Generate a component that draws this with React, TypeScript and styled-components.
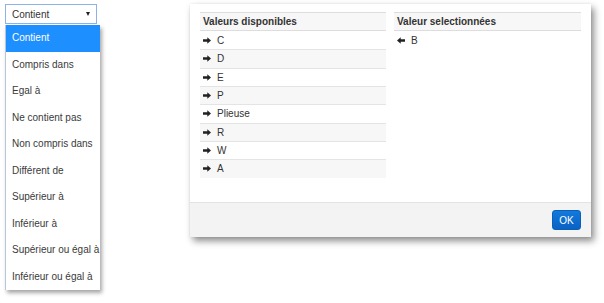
import React from "react";
import styled, { createGlobalStyle } from "styled-components";

const GlobalStyle = createGlobalStyle`
  html, body {
    margin: 0;
    padding: 0;
    background: #ffffff;
    font-family: "Liberation Sans", Arial, sans-serif;
  }
`;

const operators = [
  "Contient",
  "Compris dans",
  "Egal à",
  "Ne contient pas",
  "Non compris dans",
  "Différent de",
  "Supérieur à",
  "Inférieur à",
  "Supérieur ou égal à",
  "Inférieur ou égal à",
];

const available = ["C", "D", "E", "P", "Plieuse", "R", "W", "A"];
const selected = ["B"];

const Page = styled.div`
  display: flex;
  align-items: flex-start;
  padding: 4px 0 0 5px;
  width: 604px;
  height: 303px;
  box-sizing: border-box;
`;

const Dropdown = styled.div`
  display: flex;
  flex-direction: column;
  width: 95px;
`;

const Select = styled.div`
  display: flex;
  align-items: center;
  justify-content: space-between;
  width: 92px;
  height: 20px;
  box-sizing: border-box;
  padding: 0 6px 0 6px;
  border: 1px solid #8eb1e6;
  font-size: 10px;
  color: #333;
`;

const Caret = styled.span`
  width: 0;
  height: 0;
  border-left: 2.5px solid transparent;
  border-right: 2.5px solid transparent;
  border-top: 4px solid #222;
`;

const List = styled.ul`
  list-style: none;
  margin: 1px 0 0;
  padding: 0;
  background: #fff;
  border-left: 1px solid #b8c6dc;
  box-shadow: 2px 3px 4px rgba(0, 0, 0, 0.35);
  overflow: hidden;
`;

const Option = styled.li<{ $active?: boolean }>`
  height: 26.5px;
  line-height: 26.5px;
  padding-left: 6px;
  font-size: 10px;
  white-space: nowrap;
  color: ${(p) => (p.$active ? "#fff" : "#3a3a3a")};
  background: ${(p) => (p.$active ? "#1e8fff" : "#fff")};
`;

const Dialog = styled.div`
  margin-left: 90px;
  width: 401px;
  display: flex;
  flex-direction: column;
  background: #fff;
  box-shadow: 3px 4px 7px rgba(0, 0, 0, 0.45), 0 0 2px rgba(0, 0, 0, 0.08);
`;

const Body = styled.div`
  display: grid;
  grid-template-columns: 186px 187px;
  column-gap: 8px;
  padding: 8px 10px 0 10px;
  height: 198px;
  box-sizing: border-box;
`;

const Table = styled.div`
  display: flex;
  flex-direction: column;
  font-size: 10px;
  color: #333;
`;

const Header = styled.div`
  height: 19px;
  box-sizing: border-box;
  line-height: 17px;
  padding: 0 3px;
  font-weight: bold;
  background: #f7f7f7;
  border-top: 1px solid #dddddd;
  border-bottom: 1px solid #dddddd;
`;

const Row = styled.div<{ $striped?: boolean }>`
  display: flex;
  align-items: center;
  gap: 6px;
  height: 18.33px;
  box-sizing: border-box;
  padding: 0 3px;
  background: ${(p) => (p.$striped ? "#f7f7f7" : "#fff")};
  border-top: 1px solid #e4e4e4;
  &:first-of-type {
    border-top: none;
  }
`;

const Arrow = ({ left }: { left?: boolean }) => (
  <svg
    width="8"
    height="7"
    viewBox="0 0 8 7"
    style={{ transform: left ? "scaleX(-1)" : undefined }}
  >
    <path d="M0 2.3H4.3V0.3L8 3.5L4.3 6.7V4.7H0Z" fill="#222" />
  </svg>
);

const Footer = styled.div`
  display: flex;
  justify-content: flex-end;
  align-items: center;
  height: 35px;
  box-sizing: border-box;
  padding: 0 10px;
  background: #f3f3f3;
  border-top: 1px solid #e3e3e3;
`;

const OkButton = styled.button`
  width: 29px;
  height: 20px;
  padding: 0;
  border: 1px solid #0a5fb8;
  border-radius: 3px;
  background: linear-gradient(#1279dc, #0a62c4);
  color: #fff;
  font-family: "Liberation Sans", Arial, sans-serif;
  font-size: 10px;
  cursor: pointer;
`;

export default function App() {
  return (
    <>
      <GlobalStyle />
      <Page>
        <Dropdown>
          <Select>
            <span>Contient</span>
            <Caret />
          </Select>
          <List>
            {operators.map((op, i) => (
              <Option key={op} $active={i === 0}>
                {op}
              </Option>
            ))}
          </List>
        </Dropdown>
        <Dialog>
          <Body>
            <Table>
              <Header>Valeurs disponibles</Header>
              <div>
                {available.map((v, i) => (
                  <Row key={v} $striped={i % 2 === 1}>
                    <Arrow />
                    <span>{v}</span>
                  </Row>
                ))}
              </div>
            </Table>
            <Table>
              <Header>Valeur selectionnées</Header>
              <div>
                {selected.map((v) => (
                  <Row key={v}>
                    <Arrow left />
                    <span>{v}</span>
                  </Row>
                ))}
              </div>
            </Table>
          </Body>
          <Footer>
            <OkButton>OK</OkButton>
          </Footer>
        </Dialog>
      </Page>
    </>
  );
}
